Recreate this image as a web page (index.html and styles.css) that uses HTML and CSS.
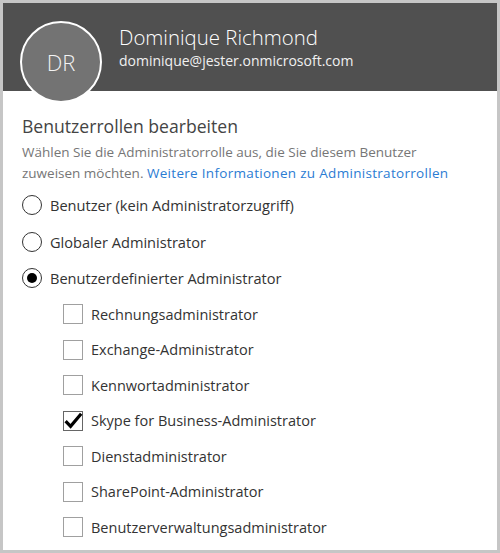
FILE: index.html
```html
<!DOCTYPE html>
<html lang="de">
<head>
<meta charset="utf-8">
<link rel="stylesheet" href="styles.css">
</head>
<body>
<div class="frame">
  <header class="head">
    <div class="avatar">DR</div>
    <div class="who">
      <div class="name">Dominique Richmond</div>
      <div class="mail">dominique@jester.onmicrosoft.com</div>
    </div>
  </header>
  <main class="content">
    <h1 class="title">Benutzerrollen bearbeiten</h1>
    <p class="desc">Wählen Sie die Administratorrolle aus, die Sie diesem Benutzer zuweisen möchten. <a class="link" href="#">Weitere Informationen zu Administratorrollen</a></p>
    <ul class="radios">
      <li class="radio"><span class="dot"></span>Benutzer (kein Administratorzugriff)</li>
      <li class="radio"><span class="dot"></span>Globaler Administrator</li>
      <li class="radio on"><span class="dot"></span>Benutzerdefinierter Administrator</li>
    </ul>
    <ul class="checks">
      <li class="check"><span class="box"></span>Rechnungsadministrator</li>
      <li class="check"><span class="box"></span>Exchange-Administrator</li>
      <li class="check"><span class="box"></span>Kennwortadministrator</li>
      <li class="check"><span class="box on"><svg viewBox="0 0 20 20" width="20" height="20"><path d="M2.6 10.2 L7.6 15.4 L18.2 2.8" fill="none" stroke="#000" stroke-width="3.2" stroke-linejoin="miter"/></svg></span>Skype for Business-Administrator</li>
      <li class="check"><span class="box"></span>Dienstadministrator</li>
      <li class="check"><span class="box"></span>SharePoint-Administrator</li>
      <li class="check"><span class="box"></span>Benutzerverwaltungsadministrator</li>
    </ul>
  </main>
</div>
</body>
</html>
```
FILE: styles.css
```css
html, body { margin: 0; padding: 0; }
body { font-family: "Open Sans", "Noto Sans", sans-serif; }
.frame {
  width: 500px; height: 553px; box-sizing: border-box;
  border: 3px solid #c6c6c6; background: #fff; overflow: hidden;
}
.head {
  height: 88px; background: #505050; display: flex; align-items: flex-start;
  padding-left: 17px; box-sizing: border-box;
}
.avatar {
  flex: none; width: 82px; height: 82px; margin-top: 18px; box-sizing: border-box;
  border: 2px solid #fff; border-radius: 50%; background: #737373;
  color: #f4f4f4; font-size: 22px; font-weight: 300;
  display: flex; align-items: center; justify-content: center; position: relative; z-index: 1;
}
.who { margin-left: 17px; padding-top: 21px; color: #fff; }
.name { font-size: 20.4px; font-weight: 300; line-height: 26px; }
.mail { font-size: 14px; font-weight: 400; line-height: 21px; color: #f0f0f0; }
.content { padding: 0 19px; }
.title { margin: 22px 0 0; font-size: 17.6px; font-weight: 400; color: #444; line-height: 26px; }
.desc { margin: 3px 0 0; font-size: 13.5px; line-height: 21px; color: #767676; }
.link { color: #2b7cd3; text-decoration: none; letter-spacing: 0.3px; }
.radios, .checks { list-style: none; margin: 0; padding: 0; }
.radios { margin-top: 3px; }
.radio { display: flex; align-items: center; height: 36.5px; font-size: 14.6px; color: #333; }
.dot {
  flex: none; width: 20px; height: 20px; box-sizing: border-box; border: 1.5px solid #333;
  border-radius: 50%; margin-right: 8px; display: flex; align-items: center; justify-content: center;
}
.radio.on .dot::after { content: ""; width: 10px; height: 10px; border-radius: 50%; background: #000; }
.checks { padding-left: 41px; }
.check { display: flex; align-items: center; height: 35.5px; font-size: 14.5px; color: #333; }
.box {
  flex: none; width: 20px; height: 20px; box-sizing: border-box; border: 1px solid #a0a0a0;
  margin-right: 8px; position: relative;
}
.box.on { border-color: #666; }
.box svg { position: absolute; left: -1px; top: -1px; overflow: visible; }
```
